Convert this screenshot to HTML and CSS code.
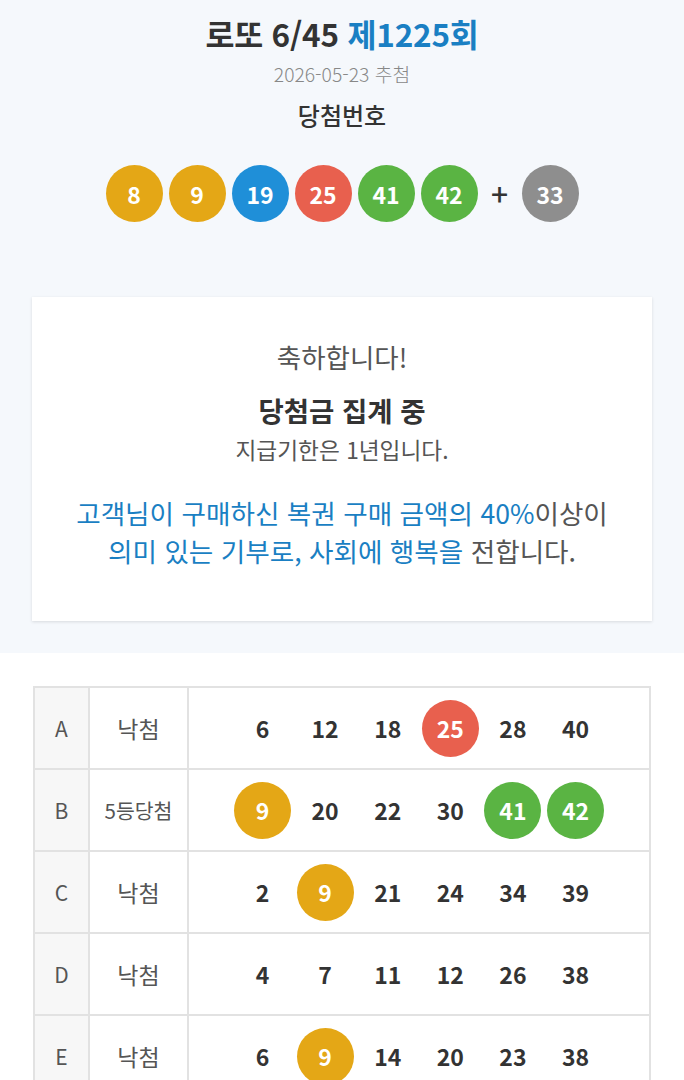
FILE: index.html
```html
<!DOCTYPE html>
<html lang="ko">
<head>
<meta charset="utf-8">
<title>로또 6/45 제1225회</title>
<link rel="stylesheet" href="styles.css">
</head>
<body>
<section class="top">
  <h1 class="title">로또 6/45 <span class="blue">제1225회</span></h1>
  <p class="date">2026-05-23 추첨</p>
  <h2 class="sub">당첨번호</h2>
  <div class="balls">
    <span class="ball y">8</span>
    <span class="ball y">9</span>
    <span class="ball b">19</span>
    <span class="ball r">25</span>
    <span class="ball g">41</span>
    <span class="ball g">42</span>
    <span class="plus">+</span>
    <span class="ball k">33</span>
  </div>
  <div class="card">
    <p class="congrats">축하합니다!</p>
    <p class="prize">당첨금 집계 중</p>
    <p class="limit">지급기한은 1년입니다.</p>
    <p class="donate"><span class="blue2">고객님이 구매하신 복권 구매 금액의 40%</span>이상이<br><span class="blue2">의미 있는 기부로, 사회에 행복을</span> 전합니다.</p>
  </div>
</section>
<section class="bottom">
  <table class="games">
    <tr>
      <td class="c1">A</td><td class="c2">낙첨</td>
      <td class="c3"><div class="nums"><span class="n">6</span><span class="n">12</span><span class="n">18</span><span class="n ball r">25</span><span class="n">28</span><span class="n">40</span></div></td>
    </tr>
    <tr>
      <td class="c1">B</td><td class="c2 small">5등당첨</td>
      <td class="c3"><div class="nums"><span class="n ball y">9</span><span class="n">20</span><span class="n">22</span><span class="n">30</span><span class="n ball g">41</span><span class="n ball g">42</span></div></td>
    </tr>
    <tr>
      <td class="c1">C</td><td class="c2">낙첨</td>
      <td class="c3"><div class="nums"><span class="n">2</span><span class="n ball y">9</span><span class="n">21</span><span class="n">24</span><span class="n">34</span><span class="n">39</span></div></td>
    </tr>
    <tr>
      <td class="c1">D</td><td class="c2">낙첨</td>
      <td class="c3"><div class="nums"><span class="n">4</span><span class="n">7</span><span class="n">11</span><span class="n">12</span><span class="n">26</span><span class="n">38</span></div></td>
    </tr>
    <tr>
      <td class="c1">E</td><td class="c2">낙첨</td>
      <td class="c3"><div class="nums"><span class="n">6</span><span class="n ball y">9</span><span class="n">14</span><span class="n">20</span><span class="n">23</span><span class="n">38</span></div></td>
    </tr>
  </table>
</section>
</body>
</html>
```
FILE: styles.css
```css
html, body {
  margin: 0;
  padding: 0;
  background: #ffffff;
  font-family: "Noto Sans CJK KR", "Noto Sans", sans-serif;
  color: #333333;
}
p, h1, h2 { margin: 0; }

.top {
  background: #f5f8fc;
  padding: 12px 32px 32px;
  display: flex;
  flex-direction: column;
  align-items: center;
}
.title {
  font-size: 31.5px;
  font-weight: 700;
  line-height: 42px;
  color: #333333;
  letter-spacing: -0.2px;
}
.blue { color: #1a7fc3; }
.date {
  margin-top: 6px;
  font-size: 19.3px;
  line-height: 28px;
  font-weight: 300;
  color: #888888;
}
.sub {
  margin-top: 12px;
  font-size: 24px;
  line-height: 30px;
  font-weight: 500;
  color: #333333;
}
.balls {
  margin-top: 35px;
  display: flex;
  align-items: center;
  gap: 6px;
}
.ball {
  width: 57px;
  height: 57px;
  border-radius: 50%;
  display: flex;
  align-items: center;
  justify-content: center;
  color: #ffffff;
  font-size: 23px;
  font-weight: 700;
}
.y { background: #e4a716; }
.b { background: #1f8fd8; }
.r { background: #e8604e; }
.g { background: #5ab443; }
.k { background: #8e8e8e; }
.plus {
  width: 32px;
  text-align: center;
  font-size: 30px;
  font-weight: 500;
  color: #333333;
  line-height: 57px;
}
.card {
  margin-top: 75px;
  align-self: stretch;
  background: #ffffff;
  box-shadow: 0 1px 3px rgba(0,0,0,0.12);
  padding: 42px 0 51px;
  display: flex;
  flex-direction: column;
  align-items: center;
  text-align: center;
}
.congrats {
  font-size: 26.5px;
  line-height: 36px;
  color: #555555;
}
.prize {
  margin-top: 17px;
  font-size: 27.5px;
  line-height: 36px;
  font-weight: 700;
  color: #333333;
}
.limit {
  margin-top: 7px;
  font-size: 22.7px;
  line-height: 30px;
  color: #555555;
}
.donate {
  margin-top: 29px;
  font-size: 26.6px;
  line-height: 38px;
  color: #555555;
}
.blue2 { color: #1a7fc3; }

.bottom {
  padding: 33px 33px 0;
}
.games {
  width: 100%;
  border-collapse: collapse;
  border: 2px solid #e2e2e2;
}
.games td {
  border: 2px solid #e2e2e2;
  height: 80px;
  padding: 0;
  text-align: center;
  vertical-align: middle;
}
.c1 {
  width: 53px;
  background: #f7f7f7;
  font-size: 21px;
  color: #555555;
}
.c2 {
  width: 97px;
  font-size: 23px;
  color: #555555;
}
.c2.small { font-size: 20.5px; }
.nums {
  display: flex;
  justify-content: center;
  gap: 5.6px;
}
.n {
  width: 57px;
  height: 57px;
  display: flex;
  align-items: center;
  justify-content: center;
  font-size: 23px;
  font-weight: 700;
  color: #333333;
}
.n.ball { color: #ffffff; }
```
